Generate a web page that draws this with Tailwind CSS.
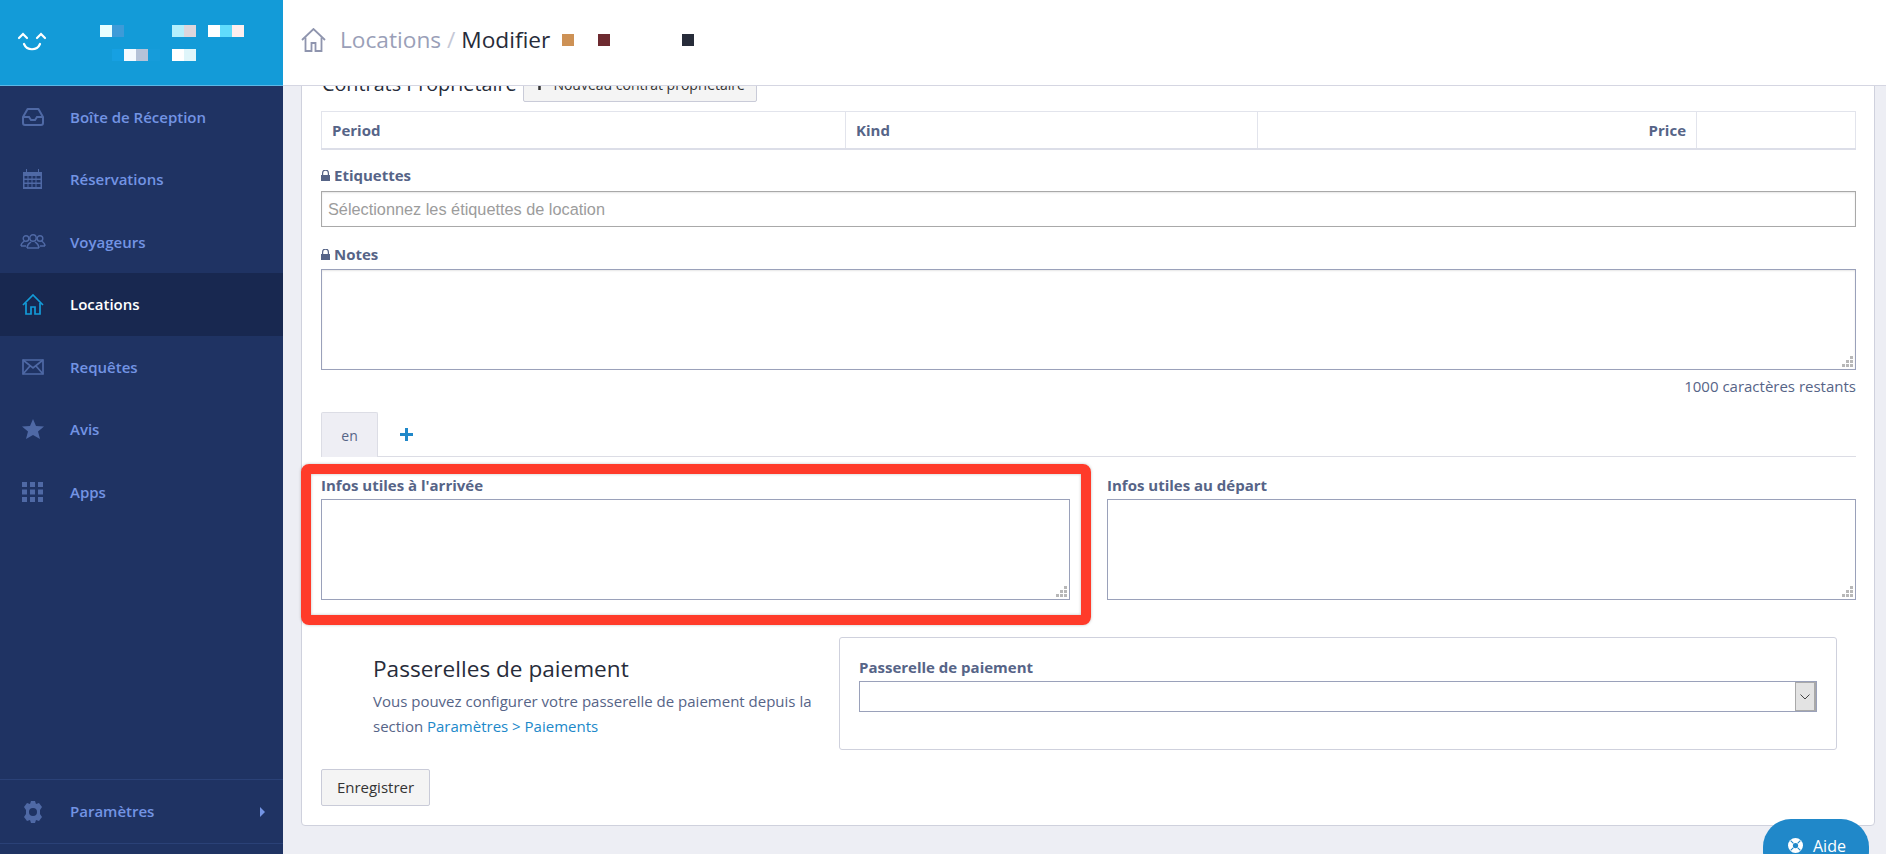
<!DOCTYPE html>
<html lang="fr">
<head>
    <meta charset="UTF-8">
    <meta name="viewport" content="width=device-width, initial-scale=1.0">
    <title>Locations / Modifier</title>
    <script src="https://cdn.jsdelivr.net/npm/@tailwindcss/browser@4"></script>
</head>
<body class="bg-[#edeef4] font-['Open_Sans',sans-serif]">
    <div class="flex h-[854px] overflow-hidden relative">
        <!-- sidebar -->
        <aside class="w-[283px] shrink-0 flex flex-col bg-[#1f3363]">
            <div class="h-[86px] shrink-0 bg-[#139bd8] border-b border-[#5cb8e6] flex">
                <svg class="w-[30px] h-[30px] ml-[17px] mt-[31px]" viewBox="0 0 30 30" fill="none" stroke="#fff" stroke-width="2.200" stroke-linecap="round"><path d="M2 7l4-4 4 4"/><path d="M20 7l4-4 4 4"/><path d="M7 13c3 7 13 7 16 0"/></svg>
                <div class="ml-[53px] mt-[25px] flex flex-col gap-[12px]">
                    <div class="flex h-[12px]">
                        <i class="w-[12px] bg-[#e6ffff]"></i><i class="w-[12px] bg-[#3d9bd8]"></i>
                        <i class="w-[48px]"></i>
                        <i class="w-[12px] bg-[#b3effc]"></i><i class="w-[12px] bg-[#dcd6dc]"></i>
                        <i class="w-[12px]"></i>
                        <i class="w-[12px] bg-[#ffffff]"></i><i class="w-[12px] bg-[#60dcfc]"></i><i class="w-[12px] bg-[#fdeeee]"></i>
                    </div>
                    <div class="flex h-[12px] pl-[12px]">
                        <i class="w-[12px] bg-[#16a0e2]"></i><i class="w-[12px] bg-[#f5faff]"></i><i class="w-[12px] bg-[#b5c2d8]"></i><i class="w-[12px] bg-[#169cda]"></i>
                        <i class="w-[12px]"></i>
                        <i class="w-[12px] bg-[#ffffff]"></i><i class="w-[12px] bg-[#dff5fa]"></i>
                    </div>
                </div>
            </div>
            <nav class="-mt-[1px] text-[15px] font-semibold text-[#7394e4]">
                <a class="h-[62.5px] flex items-center pl-[22px] pt-[1px]">
                    <svg class="w-[22px] h-[18px]" viewBox="0 0 22 18" fill="none" stroke="#4f69a5" stroke-width="2"><path d="M1 9l4-7a2 2 0 0 1 1-1h10a2 2 0 0 1 1 1l4 7v6a2 2 0 0 1-2 2H3a2 2 0 0 1-2-2z"/><path d="M1 9h6l2 3h4l2-3h6"/></svg>
                    <span class="ml-[26px]">Boîte de Réception</span>
                </a>
                <a class="h-[62.5px] flex items-center pl-[23px]">
                    <svg class="w-[19px] h-[20px]" viewBox="0 0 19 20" fill="#4f69a5"><path d="M0 3h3V0h1v3h11V0h1v3h3v17H0z"/><path fill="#1f3363" d="M1.500 7h3v2.500h-3zM5.500 7h3v2.500h-3zM9.500 7h3v2.500h-3zM13.500 7h4v2.500h-4zM1.500 11h3v2.500h-3zM5.500 11h3v2.500h-3zM9.500 11h3v2.500h-3zM13.500 11h4v2.500h-4zM1.500 15h3v3h-3zM5.500 15h3v3h-3zM9.500 15h3v3h-3zM13.500 15h4v3h-4z"/></svg>
                    <span class="ml-[28px]">Réservations</span>
                </a>
                <a class="h-[62.5px] flex items-center pl-[20px] pt-[1px]">
                    <svg class="w-[26px] h-[15px]" viewBox="0 0 26 15" fill="none" stroke="#4f69a5" stroke-width="1.400"><circle cx="13" cy="4" r="3.200"/><path d="M7 14c0-4 3-5 4-6M19 14c0-4-3-5-4-6M7 14h12"/><circle cx="6" cy="4.500" r="2.800"/><path d="M1 12c0-3 2-4 3.500-5M1 12h5"/><circle cx="20" cy="4.500" r="2.800"/><path d="M25 12c0-3-2-4-3.500-5M25 12h-5"/></svg>
                    <span class="ml-[24px]">Voyageurs</span>
                </a>
                <a class="h-[63px] flex items-center pl-[22px] bg-[#182850] text-white">
                    <svg class="w-[22px] h-[21px]" viewBox="0 0 22 21" fill="none" stroke="#139bd8" stroke-width="1.700"><path d="M1 11L11 1l10 10"/><path d="M4 9v11h5v-7h4v7h5V9"/></svg>
                    <span class="ml-[26px]">Locations</span>
                </a>
                <a class="h-[62.5px] flex items-center pl-[22px]">
                    <svg class="w-[22px] h-[16px]" viewBox="0 0 22 16" fill="none" stroke="#4f69a5" stroke-width="1.700"><path d="M1 1h20v14H1z"/><path d="M1 1l10 8 10-8M1 15l7-8M21 15l-7-8"/></svg>
                    <span class="ml-[26px]">Requêtes</span>
                </a>
                <a class="h-[62.5px] flex items-center pl-[22px]">
                    <svg class="w-[22px] h-[20px]" viewBox="0 0 22 20" fill="#4f69a5"><path d="M11 0l3 7 8 .600-6 5 2 7.400-7-4-7 4 2-7.400-6-5L8 7z"/></svg>
                    <span class="ml-[26px]">Avis</span>
                </a>
                <a class="h-[62.5px] flex items-center pl-[22px]">
                    <svg class="w-[21px] h-[20px]" viewBox="0 0 21 20" fill="#4f69a5"><path d="M0 0h5v5H0zM8 0h5v5H8zM16 0h5v5h-5zM0 7.500h5v5H0zM8 7.500h5v5H8zM16 7.500h5v5h-5zM0 15h5v5H0zM8 15h5v5H8zM16 15h5v5h-5z"/></svg>
                    <span class="ml-[27px]">Apps</span>
                </a>
            </nav>
            <div class="mt-auto mb-[10px] h-[65px] border-y border-[#2a4177] flex items-center pl-[23px] pr-[18px] text-[15px] font-semibold text-[#7394e4]">
                <svg class="w-[20px] h-[22px]" viewBox="0 0 20 22" fill="#4f69a5"><path fill-rule="evenodd" d="M8 0h4l1 3 3-1 3 4-2 3v4l2 3-3 4-3-1-1 3H8l-1-3-3 1-3-4 2-3V9L1 6l3-4 3 1zM10 7a4 4 0 1 0 0 8 4 4 0 0 0 0-8z"/></svg>
                <span class="ml-[27px]">Paramètres</span>
                <span class="ml-auto w-0 h-0 border-y-[5px] border-y-transparent border-l-[5px] border-l-[#7394e4]"></span>
            </div>
        </aside>

        <!-- right side -->
        <div class="flex-1 flex flex-col min-w-0">
            <header class="h-[86px] shrink-0 bg-white border-b border-[#d5d6e2] flex items-center pl-[18px] pb-[5px] relative z-10">
                <svg class="w-[25px] h-[24px]" viewBox="0 0 25 24" fill="none" stroke="#8f95ae" stroke-width="1.800"><path d="M1 12L12.500 1 24 12"/><path d="M4.500 9.500V23h6v-8h4v8h6V9.500"/></svg>
                <div class="ml-[14px] text-[22.700px] leading-none text-[#9a9fb8]">Locations <span class="text-[#c5c8d6]">/</span> <span class="text-[#272c3a]">Modifier</span></div>
                <i class="ml-[12px] w-[12px] h-[12px] bg-[#cd9155]"></i>
                <i class="ml-[24px] w-[12px] h-[12px] bg-[#6d2a30]"></i>
                <i class="ml-[72px] w-[12px] h-[12px] bg-[#272c3a]"></i>
            </header>

            <main class="flex-1 overflow-hidden pl-[18px] pr-[11px]">
                <div class="-mt-[40px] bg-white border border-[#cfd1dd] rounded-[4px] pt-[19px] pb-[19px] pl-[19px] pr-[18px] text-[14px] text-[#566487]">
                    <div class="h-[36px] mb-[9px] flex items-end gap-[6px]">
                        <h3 class="text-[19.800px] leading-[36px] text-[#272c3a] pl-px">Contrats Propriétaire</h3>
                        <button class="w-[234px] h-[36px] bg-[#f4f4f4] border border-[#c9cbd8] rounded-[2px] text-[14px] text-[#333] flex items-center justify-center gap-2">
                            <svg class="w-[11px] h-[11px]" viewBox="0 0 13 13" fill="#333"><path d="M5 0h3v5h5v3H8v5H5V8H0V5h5z"/></svg>Nouveau contrat propriétaire
                        </button>
                    </div>

                    <table class="w-full table-fixed border-collapse border border-[#e2e4ec] border-b-2 border-b-[#dcdee8] h-[39px] text-[15px] font-bold text-[#566487]">
                        <tr>
                            <th class="w-[524px] text-left pl-[10px] border-r border-[#e2e4ec]">Period</th>
                            <th class="w-[412px] text-left pl-[10px] border-r border-[#e2e4ec]">Kind</th>
                            <th class="w-[439px] text-right pr-[10px] border-r border-[#e2e4ec]">Price</th>
                            <th></th>
                        </tr>
                    </table>

                    <label class="mt-[15px] mb-[6px] h-[20px] flex items-center gap-[4px] text-[15px] font-bold">
                        <svg class="w-[9px] h-[11px]" viewBox="0 0 9 11" fill="#566487"><path d="M0 5h1V3a3.500 3.500 0 0 1 7 0v2h1v6H0zM2.200 5h4.600V3a2.300 2.300 0 0 0-4.600 0z"/></svg>
                        Etiquettes
                    </label>
                    <input class="block w-full h-[36px] px-[6px] border border-[#a9a9a9] shadow-[inset_0_1px_2px_rgba(0,0,0,0.1)] font-['Liberation_Sans',sans-serif] text-[16.300px] placeholder:text-[#9c9c9c] outline-none" placeholder="Sélectionnez les étiquettes de location">

                    <label class="mt-[17px] mb-[5px] h-[20px] flex items-center gap-[4px] text-[15px] font-bold">
                        <svg class="w-[9px] h-[11px]" viewBox="0 0 9 11" fill="#566487"><path d="M0 5h1V3a3.500 3.500 0 0 1 7 0v2h1v6H0zM2.200 5h4.600V3a2.300 2.300 0 0 0-4.600 0z"/></svg>
                        Notes
                    </label>
                    <div class="relative">
                        <textarea class="block w-full h-[101px] border border-[#9aa1ba] shadow-[inset_0_1px_2px_rgba(0,0,0,0.1)] outline-none resize-none"></textarea>
                        <svg class="absolute right-[3px] bottom-[3px] w-[11px] h-[11px]" viewBox="0 0 11 11" fill="#b8b8b8"><path d="M8 0h3v3H8zM4 4h3v3H4zM8 4h3v3H8zM0 8h3v3H0zM4 8h3v3H4zM8 8h3v3H8z"/></svg>
                    </div>
                    <div class="mt-[6px] h-[20px] leading-[20px] text-[15px] text-right">1000 caractères restants</div>

                    <div class="mt-[16px] h-[45px] border-b border-[#dcdde5] flex">
                        <div class="w-[57px] h-[45px] bg-[#eeeef4] border border-b-0 border-[#dcdde5] rounded-t-[2px] flex items-center justify-center">en</div>
                        <svg class="ml-[22px] mt-[16px] w-[13px] h-[13px]" viewBox="0 0 13 13" fill="#2088c9"><path d="M5 0h3v5h5v3H8v5H5V8H0V5h5z"/></svg>
                    </div>

                    <div class="mt-[18px] grid grid-cols-2 gap-x-[37px]">
                        <div>
                            <label class="block mb-[4px] h-[20px] leading-[20px] font-bold text-[15px]">Infos utiles à l'arrivée</label>
                            <div class="relative">
                                <textarea class="block w-full h-[101px] border border-[#9aa1ba] outline-none resize-none"></textarea>
                                <svg class="absolute right-[3px] bottom-[3px] w-[11px] h-[11px]" viewBox="0 0 11 11" fill="#b8b8b8"><path d="M8 0h3v3H8zM4 4h3v3H4zM8 4h3v3H8zM0 8h3v3H0zM4 8h3v3H4zM8 8h3v3H8z"/></svg>
                            </div>
                        </div>
                        <div>
                            <label class="block mb-[4px] h-[20px] leading-[20px] font-bold text-[15px]">Infos utiles au départ</label>
                            <div class="relative">
                                <textarea class="block w-full h-[101px] border border-[#9aa1ba] outline-none resize-none"></textarea>
                                <svg class="absolute right-[3px] bottom-[3px] w-[11px] h-[11px]" viewBox="0 0 11 11" fill="#b8b8b8"><path d="M8 0h3v3H8zM4 4h3v3H4zM8 4h3v3H8zM0 8h3v3H0zM4 8h3v3H4zM8 8h3v3H8z"/></svg>
                            </div>
                        </div>
                    </div>

                    <div class="mt-[37px] flex">
                        <div class="w-[518px] shrink-0 pl-[52px] pt-[17px]">
                            <h3 class="text-[22.600px] leading-[30px] text-[#272c3a]">Passerelles de paiement</h3>
                            <p class="mt-[5px] leading-[25px] text-[15px]">Vous pouvez configurer votre passerelle de paiement depuis la section <a class="text-[#2088c9]">Paramètres &gt; Paiements</a></p>
                        </div>
                        <div class="w-[998px] h-[113px] border border-[#cfd1dd] rounded-[3px] pt-[19px] px-[19px]">
                            <label class="block mb-[4px] h-[20px] leading-[20px] font-bold text-[15px]">Passerelle de paiement</label>
                            <div class="h-[31px] border border-[#9aa1ba] flex justify-end">
                                <div class="w-[21px] bg-[#e3e3e3] border-l border-[#a9a9a9] border-r-2 border-r-[#a9a9a9] border-y border-y-[#a9a9a9] flex items-center justify-center">
                                    <svg class="w-[10px] h-[6px]" viewBox="0 0 10 6" fill="none" stroke="#444" stroke-width="1"><path d="M.5.500L5 5 9.500.500"/></svg>
                                </div>
                            </div>
                        </div>
                    </div>

                    <button class="mt-[19px] block w-[109px] h-[37px] bg-[#f4f4f4] border border-[#c9cbd8] rounded-[2px] text-[15px] text-[#333]">Enregistrer</button>
                </div>
            </main>
        </div>

        <!-- annotation over the arrival field -->
        <div class="absolute left-[301px] top-[464px] w-[790px] h-[161px] border-[10px] border-[#ff3b2a] rounded-[8px] shadow-[0_0_3px_rgba(0,0,0,0.25),inset_0_0_3px_rgba(0,0,0,0.25)] pointer-events-none"></div>

        <!-- help button -->
        <button class="absolute left-[1763px] top-[819px] w-[106px] h-[60px] bg-[#2088c9] rounded-[28px] text-white text-[16px] leading-[22px] flex items-start pl-[25px] pt-[16px] gap-[10px]">
            <svg class="w-[15px] h-[15px] mt-[3px]" viewBox="0 0 16 16"><circle cx="8" cy="8" r="8" fill="#fff"/><circle cx="8" cy="8" r="2.800" fill="#2088c9"/><path d="M2.800 2.800l3 3M13.200 2.800l-3 3M2.800 13.200l3-3M13.200 13.200l-3-3" stroke="#2088c9" stroke-width="1.100"/></svg>
            Aide
        </button>
    </div>
</body>
</html>
